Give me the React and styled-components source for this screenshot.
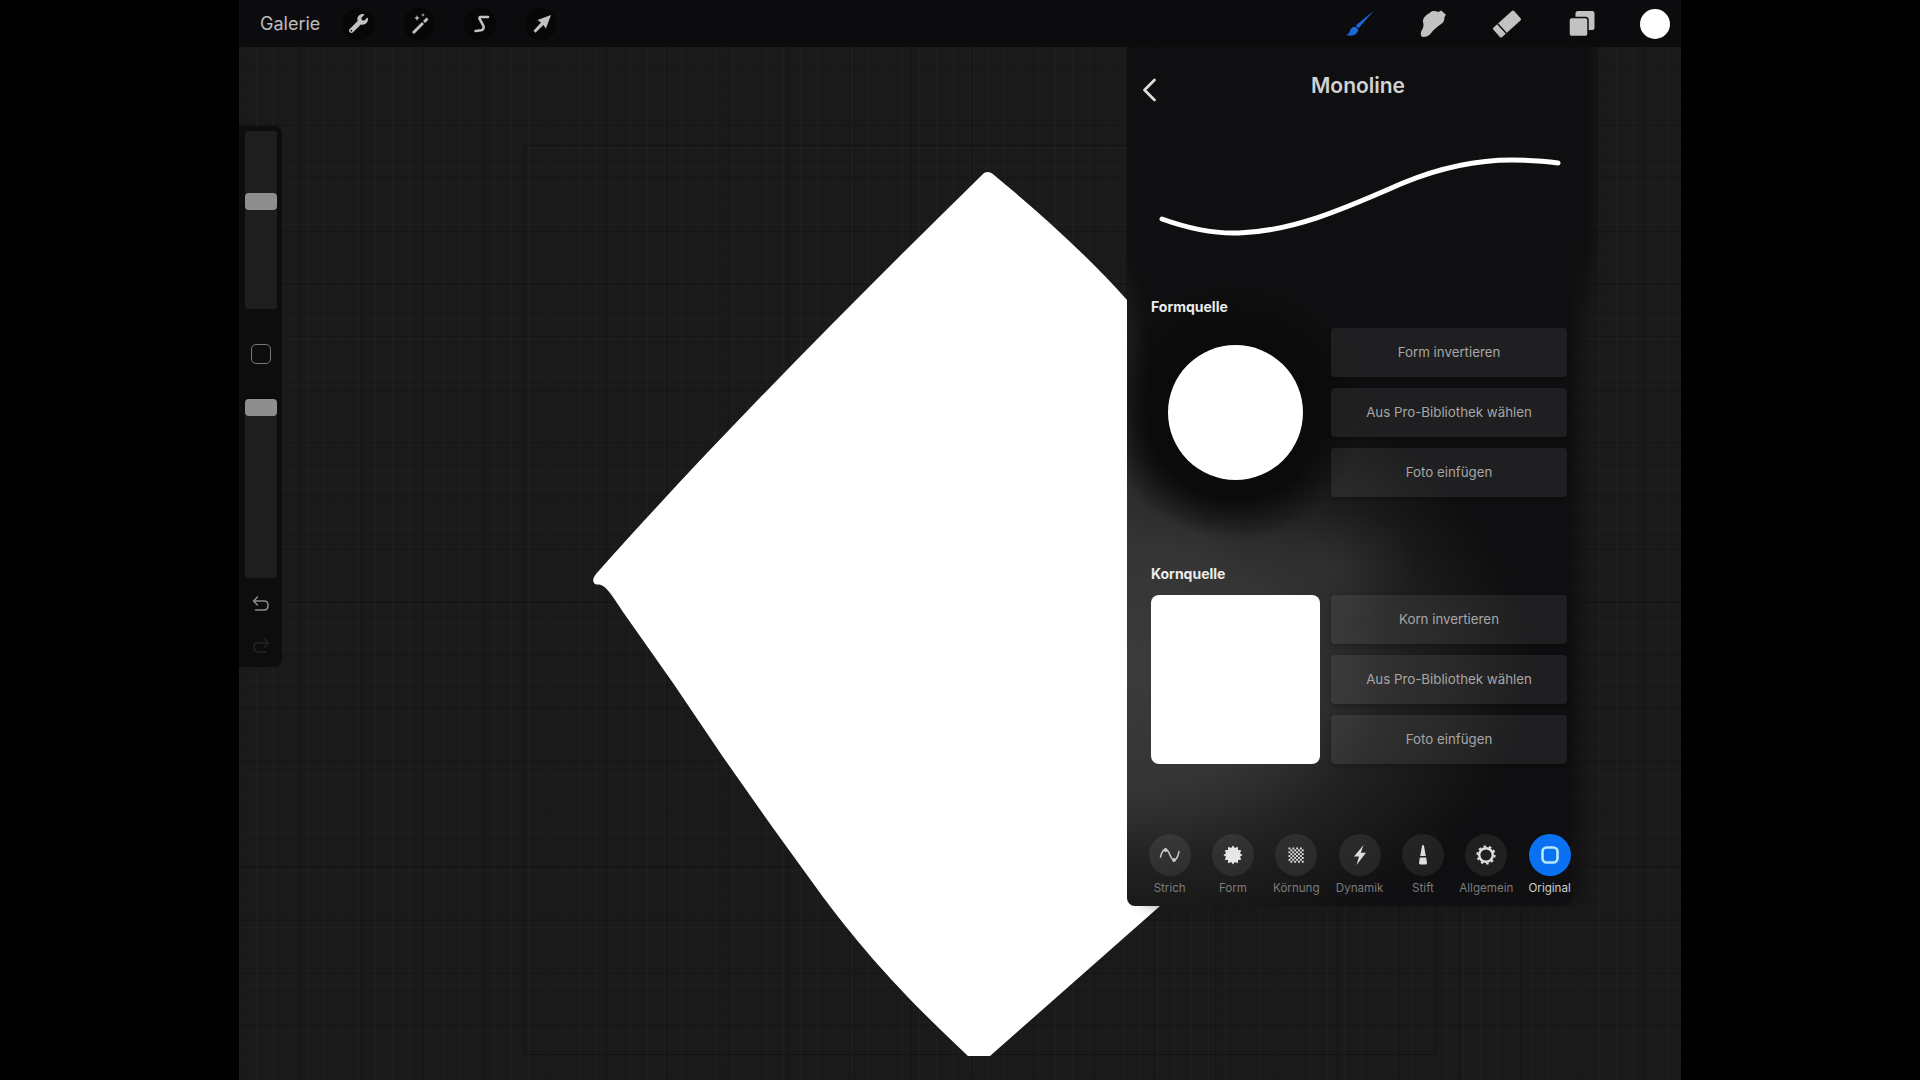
import React from "react";
import styled, { createGlobalStyle } from "styled-components";
import { FaWrench } from "react-icons/fa";

const GlobalStyle = createGlobalStyle`
  html, body { margin: 0; height: 100%; background: #000; }
  #root { height: 100%; }
  * { box-sizing: border-box; }
`;

const Screen = styled.div`
  width: 1442px;
  height: 1080px;
  margin: 0 auto;
  display: flex;
  flex-direction: column;
  overflow: hidden;
  font-family: Inter, "Liberation Sans", sans-serif;
`;

const TopBar = styled.header`
  height: 47px;
  flex: none;
  display: flex;
  align-items: center;
  justify-content: space-between;
  padding: 0 10px 0 21px;
  background: #0c0c0e;
`;

const ToolGroup = styled.div`
  display: flex;
  align-items: center;
  gap: ${(p) => p.$gap}px;
`;

const GalleryLink = styled.span`
  font-size: 18px;
  color: #bdbdbd;
  margin-right: -7px;
`;

const ToolIcon = styled.span`
  width: 32px;
  height: 32px;
  display: flex;
  align-items: center;
  justify-content: center;
  border-radius: 50%;
  color: #c2c2c2;
  background: ${(p) => (p.$dim ? "#070708" : "transparent")};
`;

const Canvas = styled.main`
  flex: 1;
  position: relative;
  background-color: #1a1a1b;
  background-image:
    repeating-linear-gradient(90deg, rgba(255, 255, 255, 0.022) 0 1px, transparent 1px 17px),
    repeating-linear-gradient(90deg, rgba(0, 0, 0, 0.12) 0 2px, transparent 2px 61px),
    repeating-linear-gradient(0deg, rgba(255, 255, 255, 0.018) 0 1px, transparent 1px 19px),
    repeating-linear-gradient(0deg, rgba(0, 0, 0, 0.12) 0 2px, transparent 2px 53px);
`;

const CanvasFrame = styled.div`
  position: absolute;
  left: 285px;
  top: 98px;
  width: 912px;
  height: 910px;
  border: 1px solid rgba(0, 0, 0, 0.28);
`;

const Shape = styled.svg`
  position: absolute;
  left: 0;
  top: 0;
  width: 1442px;
  height: 1033px;
`;

const SideBar = styled.aside`
  position: absolute;
  left: 0;
  top: 79px;
  width: 43px;
  height: 541px;
  padding: 5px 5px 0 6px;
  display: flex;
  flex-direction: column;
  align-items: center;
  background: #0d0d0e;
  border-radius: 0 8px 8px 0;
`;

const SliderTrack = styled.div`
  position: relative;
  width: 32px;
  height: ${(p) => p.$height}px;
  flex: none;
  background: #1e1e1f;
  border-radius: 3px;
`;

const SliderThumb = styled.div`
  position: absolute;
  left: 0;
  top: ${(p) => p.$top}px;
  width: 32px;
  height: 17px;
  border-radius: 4px;
  background: #8e8e8e;
`;

const ModifyButton = styled.div`
  width: 20px;
  height: 20px;
  margin: 35px 0 35px;
  flex: none;
  border: 1.5px solid #787878;
  border-radius: 5px;
`;

const SideAction = styled.span`
  height: 18px;
  margin-top: ${(p) => p.$mt}px;
  display: flex;
  color: ${(p) => p.$color};
`;

const Panel = styled.section`
  position: absolute;
  left: 888px;
  top: 0;
  width: 445px;
  height: 859px;
  display: flex;
  flex-direction: column;
  border-radius: 0 0 8px 8px;
  box-shadow: 14px 0 16px -4px rgba(15, 15, 17, 0.75);
  background:
    radial-gradient(ellipse 128px 128px at 108px 365px, #0b0b0c 68%, rgba(11, 11, 12, 0) 100%),
    radial-gradient(ellipse 90px 60px at 200px 520px, rgba(58, 58, 58, 0.5), transparent),
    radial-gradient(ellipse 400px 300px at 0px 620px, #3b3b3b 0%, #343434 42%, rgba(40, 40, 40, 0.75) 65%, transparent 100%),
    radial-gradient(ellipse 26px 240px at 0px 440px, #303030, transparent),
    #0f0f11;

  &::after {
    content: "";
    position: absolute;
    left: 100%;
    top: 0;
    width: 30px;
    height: 280px;
    background: linear-gradient(90deg, #0f0f11 50%, rgba(15, 15, 17, 0));
    mask-image: linear-gradient(180deg, #000 70%, transparent);
  }
`;

const Header = styled.div`
  position: relative;
  height: 76px;
  flex: none;
  display: flex;
  align-items: center;
  justify-content: center;
`;

const BackIcon = styled.svg`
  position: absolute;
  left: 15px;
  top: 31px;
`;

const Title = styled.h1`
  margin: 0 0 0 17px;
  font-size: 21px;
  font-weight: 600;
  color: #d2d2d2;
`;

const StrokePreview = styled.svg`
  display: block;
  width: 445px;
  height: 167px;
  flex: none;
`;

const Section = styled.div`
  padding: 8px 5px 0 24px;
  height: ${(p) => p.$height}px;
  flex: none;
`;

const SectionLabel = styled.div`
  height: 18px;
  line-height: 18px;
  font-size: 14px;
  font-weight: 700;
  color: #ececec;
`;

const SourceRow = styled.div`
  display: grid;
  grid-template-columns: 169px 236px;
  justify-content: space-between;
  margin-top: 12px;
  height: 169px;
`;

const ThumbWell = styled.div`
  display: flex;
  align-items: center;
  justify-content: center;
  background: ${(p) => (p.$square ? "#fff" : "transparent")};
  border-radius: 8px;
`;

const ShapeDot = styled.div`
  width: 135px;
  height: 135px;
  border-radius: 50%;
  background: #fff;
`;

const ButtonStack = styled.div`
  display: grid;
  grid-template-rows: repeat(3, 49px);
  align-content: space-between;
`;

const SourceButton = styled.button`
  border: 0;
  padding: 0 0 1px;
  border-radius: 4px;
  font: 400 13.3px Inter, "Liberation Sans", sans-serif;
  color: #a6a6a6;
  background: rgba(255, 255, 255, 0.07);
  box-shadow: 0 2px 4px rgba(0, 0, 0, 0.25);
`;

const TabBar = styled.nav`
  display: grid;
  grid-template-columns: repeat(7, 63.33px);
  padding: 0 0 0 11px;
`;

const Tab = styled.div`
  display: flex;
  flex-direction: column;
  align-items: center;
`;

const TabCircle = styled.span`
  width: 42px;
  height: 42px;
  display: flex;
  align-items: center;
  justify-content: center;
  border-radius: 50%;
  color: #c9c9c9;
  background: ${(p) => (p.$active ? "#0a72f2" : "rgba(255, 255, 255, 0.075)")};
`;

const TabLabel = styled.span`
  margin-top: 4px;
  font-size: 11.6px;
  line-height: 16px;
  white-space: nowrap;
  color: ${(p) => (p.$active ? "#cfcfcf" : "#7c7c7c")};
`;

const burst = Array.from({ length: 24 }, (_, i) => {
  const r = i % 2 ? 7.2 : 9.6;
  const a = (i * Math.PI) / 12;
  return `${12 + r * Math.sin(a)},${12 - r * Math.cos(a)}`;
}).join(" ");

const checker = [];
for (let r = 0; r < 8; r++) {
  for (let c = 0; c < 8; c++) {
    if ((r + c) % 2 === 0) checker.push([c, r]);
  }
}

const WandIcon = () => (
  <svg width="24" height="24" viewBox="-2 0 24 24" fill="currentColor">
    <path d="M5 22l-2-2 10-10 2 2zM16 11l-2-2 3.500-3.500 2 2z" />
    <path d="M8 3l.8 2.200L11 6l-2.200.8L8 9l-.8-2.200L5 6l2.200-.8zM14 1l.5 1.500L16 3l-1.500.5L14 5l-.5-1.500L12 3l1.500-.5z" />
  </svg>
);

const SelectIcon = () => (
  <svg width="24" height="24" viewBox="-2 0 24 24" fill="none" stroke="currentColor" strokeWidth="2.600" strokeLinecap="round" strokeLinejoin="round">
    <path d="M18 5h-7.500c-1 0-1.200 .8-1 1.600L13.500 14c.6 2-.5 4-2.500 4.300L5.500 19" />
  </svg>
);

const ArrowIcon = () => (
  <svg width="24" height="24" viewBox="-1 0 24 24" fill="currentColor">
    <path d="M21 3L7.500 8l3.500 2.500L3.500 18.800l1.900 1.900 8-7.700 2.500 3.500z" />
  </svg>
);

const BrushIcon = () => (
  <svg width="30" height="30" viewBox="-1 0 28 28" fill="#1c68d8">
    <path d="M27 1.500L10 15.500l2.500 2.500z" />
    <path d="M8.800 16.500c-2.500.2-3.700 2-4.300 4-.5 1.800-1.500 3-3.500 3.800 4 1.300 9.200.5 11-3.300.7-1.800-1-4.600-3.200-4.500z" />
  </svg>
);

const SmudgeIcon = () => (
  <svg width="29" height="29" viewBox="0 0 28 28" fill="currentColor">
    <path d="M10 4c2-2.500 6-2.500 8.500-1L21.500 1.500 26 5.500 24.500 8c.5 3-1.500 6-4.500 7.500-3 2.500-6 4.500-8 7.500-2 3-6 4.500-8.500 4-2-.5-2-3-1.500-5 2-3.500 3-6 2-9-1-3.500 2-7 6-9z" />
  </svg>
);

const EraserIcon = () => (
  <svg width="30" height="30" viewBox="0 0 28 28">
    <g transform="rotate(-42 14 14)">
      <rect x="1" y="8" width="26" height="12" rx="1.500" fill="#c2c2c2" />
      <rect x="7" y="8" width="1.300" height="12" fill="#0c0c0e" />
    </g>
  </svg>
);

const LayersIcon = () => (
  <svg width="27" height="27" viewBox="0 0 27 27" fill="currentColor">
    <rect x="7.500" y="1" width="19" height="19" rx="2.500" />
    <rect x="1" y="7.500" width="19" height="19" rx="2.500" stroke="#0c0c0e" strokeWidth="1.500" />
  </svg>
);

const StrokeTabIcon = () => (
  <svg width="24" height="24" viewBox="0 0 24 24" fill="none" stroke="currentColor" strokeWidth="1.500" strokeLinecap="round">
    <path d="M2.500 14C4 8 6 6 8 6.500c2.500.5 3.500 5 5.500 8.500 1.500 2.500 3.500 2.500 5 .5 1.200-1.800 2-4 2.500-7" />
    <circle cx="7.500" cy="7" r="1.900" fill="currentColor" stroke="none" />
    <circle cx="16" cy="17" r="1.900" fill="currentColor" stroke="none" />
  </svg>
);

const ShapeTabIcon = () => (
  <svg width="24" height="24" viewBox="0 0 24 24" fill="#e6e6e6">
    <polygon points={burst} />
  </svg>
);

const GrainTabIcon = () => (
  <svg width="24" height="24" viewBox="0 0 24 24" fill="#dcdcdc">
    {checker.map(([c, r]) => (
      <rect key={`${c}-${r}`} x={4.500 + c * 1.900} y={4.500 + r * 1.900} width="1.900" height="1.900" />
    ))}
  </svg>
);

const DynamicsTabIcon = () => (
  <svg width="24" height="24" viewBox="0 0 24 24" fill="#dcdcdc">
    <path d="M15.500 2L6 13.500h5L8.500 22 18 9.800h-5.200z" />
  </svg>
);

const PencilTabIcon = () => (
  <svg width="24" height="24" viewBox="0 0 24 24" fill="#dedede">
    <path d="M12 1.500l1 1.500 1.800 10H9.200L11 3z" />
    <path d="M8.800 14.500h6.400l.8 5.500c0 1-1 1.500-2 1.500h-4c-1 0-2-.5-2-1.500z" />
  </svg>
);

const GeneralTabIcon = () => (
  <svg width="24" height="24" viewBox="0 0 24 24" fill="none" stroke="#e0e0e0">
    <circle cx="12" cy="12" r="6.800" strokeWidth="2.400" />
    <circle cx="12" cy="12" r="8.700" strokeWidth="1.800" strokeDasharray="2.600 2.860" />
  </svg>
);

const OriginalTabIcon = () => (
  <svg width="24" height="24" viewBox="0 0 24 24" fill="none" stroke="#b9e6ff" strokeWidth="2.600">
    <rect x="4.500" y="4.500" width="15" height="15" rx="4.200" />
  </svg>
);

const UndoIcon = () => (
  <svg width="18" height="18" viewBox="0 0 18 18" fill="none" stroke="currentColor" strokeWidth="1.500" strokeLinecap="round" strokeLinejoin="round">
    <path d="M5.500 2L1.500 6l4 4M1.500 6H12c2.500 0 4 1.500 4 4.200S14.500 15 12 15H3.500" />
  </svg>
);

const RedoIcon = () => (
  <svg width="18" height="18" viewBox="0 0 18 18" fill="none" stroke="currentColor" strokeWidth="1.500" strokeLinecap="round" strokeLinejoin="round">
    <path d="M12.500 2l4 4-4 4M16.500 6H6C3.500 6 2 7.500 2 10.200S3.500 15 6 15h8.500" />
  </svg>
);

const tabs = [
  { label: "Strich", icon: <StrokeTabIcon /> },
  { label: "Form", icon: <ShapeTabIcon /> },
  { label: "Körnung", icon: <GrainTabIcon /> },
  { label: "Dynamik", icon: <DynamicsTabIcon /> },
  { label: "Stift", icon: <PencilTabIcon /> },
  { label: "Allgemein", icon: <GeneralTabIcon /> },
  { label: "Original", icon: <OriginalTabIcon />, active: true }
];

const App = () => (
  <Screen>
    <GlobalStyle />
    <TopBar>
      <ToolGroup $gap={29}>
        <GalleryLink>Galerie</GalleryLink>
        <ToolIcon $dim><FaWrench size={19} /></ToolIcon>
        <ToolIcon $dim><WandIcon /></ToolIcon>
        <ToolIcon $dim><SelectIcon /></ToolIcon>
        <ToolIcon $dim><ArrowIcon /></ToolIcon>
      </ToolGroup>
      <ToolGroup $gap={42}>
        <ToolIcon><BrushIcon /></ToolIcon>
        <ToolIcon><SmudgeIcon /></ToolIcon>
        <ToolIcon><EraserIcon /></ToolIcon>
        <ToolIcon><LayersIcon /></ToolIcon>
        <ToolIcon>
          <svg width="30" height="30" viewBox="0 0 30 30"><circle cx="15" cy="15" r="15" fill="#fff" /></svg>
        </ToolIcon>
      </ToolGroup>
    </TopBar>

    <Canvas>
      <CanvasFrame />
      <Shape viewBox="0 0 1442 1033">
        <path
          fill="#fff"
          d="M743 128C746 124 751 124 755 128C800 165 850 210 888 253L1180 530L921 859L751 1009L729 1009C690 972 640 925 584 850L534 781L484 710L434 636L384 565C376 553 370 543 364 539C360 536 357 539 355 536C353 533 355 530 357 527C470 400 600 268 743 128Z"
        />
      </Shape>

      <SideBar>
        <SliderTrack $height={178}>
          <SliderThumb $top={62} />
        </SliderTrack>
        <ModifyButton />
        <SliderTrack $height={179}>
          <SliderThumb $top={0} />
        </SliderTrack>
        <SideAction $mt={17} $color="#8c8c8c"><UndoIcon /></SideAction>
        <SideAction $mt={24} $color="#242424"><RedoIcon /></SideAction>
      </SideBar>

      <Panel>
        <Header>
          <BackIcon width="15" height="24" viewBox="0 0 15 24" fill="none" stroke="#dcdcdc" strokeWidth="2.800" strokeLinecap="round" strokeLinejoin="round">
            <path d="M12.500 2L2.500 12l10 10" />
          </BackIcon>
          <Title>Monoline</Title>
        </Header>
        <StrokePreview viewBox="0 0 445 167">
          <path
            d="M35 96C60 105 85 111 112 110C170 108 225 82 276 60C310 46 345 37 385 37C400 37 418 38 431 40"
            fill="none"
            stroke="#fff"
            strokeWidth="5"
            strokeLinecap="round"
          />
        </StrokePreview>
        <Section $height={267}>
          <SectionLabel>Formquelle</SectionLabel>
          <SourceRow>
            <ThumbWell><ShapeDot /></ThumbWell>
            <ButtonStack>
              <SourceButton>Form invertieren</SourceButton>
              <SourceButton>Aus Pro-Bibliothek wählen</SourceButton>
              <SourceButton>Foto einfügen</SourceButton>
            </ButtonStack>
          </SourceRow>
        </Section>
        <Section $height={277}>
          <SectionLabel>Kornquelle</SectionLabel>
          <SourceRow>
            <ThumbWell $square />
            <ButtonStack>
              <SourceButton>Korn invertieren</SourceButton>
              <SourceButton>Aus Pro-Bibliothek wählen</SourceButton>
              <SourceButton>Foto einfügen</SourceButton>
            </ButtonStack>
          </SourceRow>
        </Section>
        <TabBar>
          {tabs.map((t) => (
            <Tab key={t.label}>
              <TabCircle $active={t.active}>{t.icon}</TabCircle>
              <TabLabel $active={t.active}>{t.label}</TabLabel>
            </Tab>
          ))}
        </TabBar>
      </Panel>
    </Canvas>
  </Screen>
);

export default App;
